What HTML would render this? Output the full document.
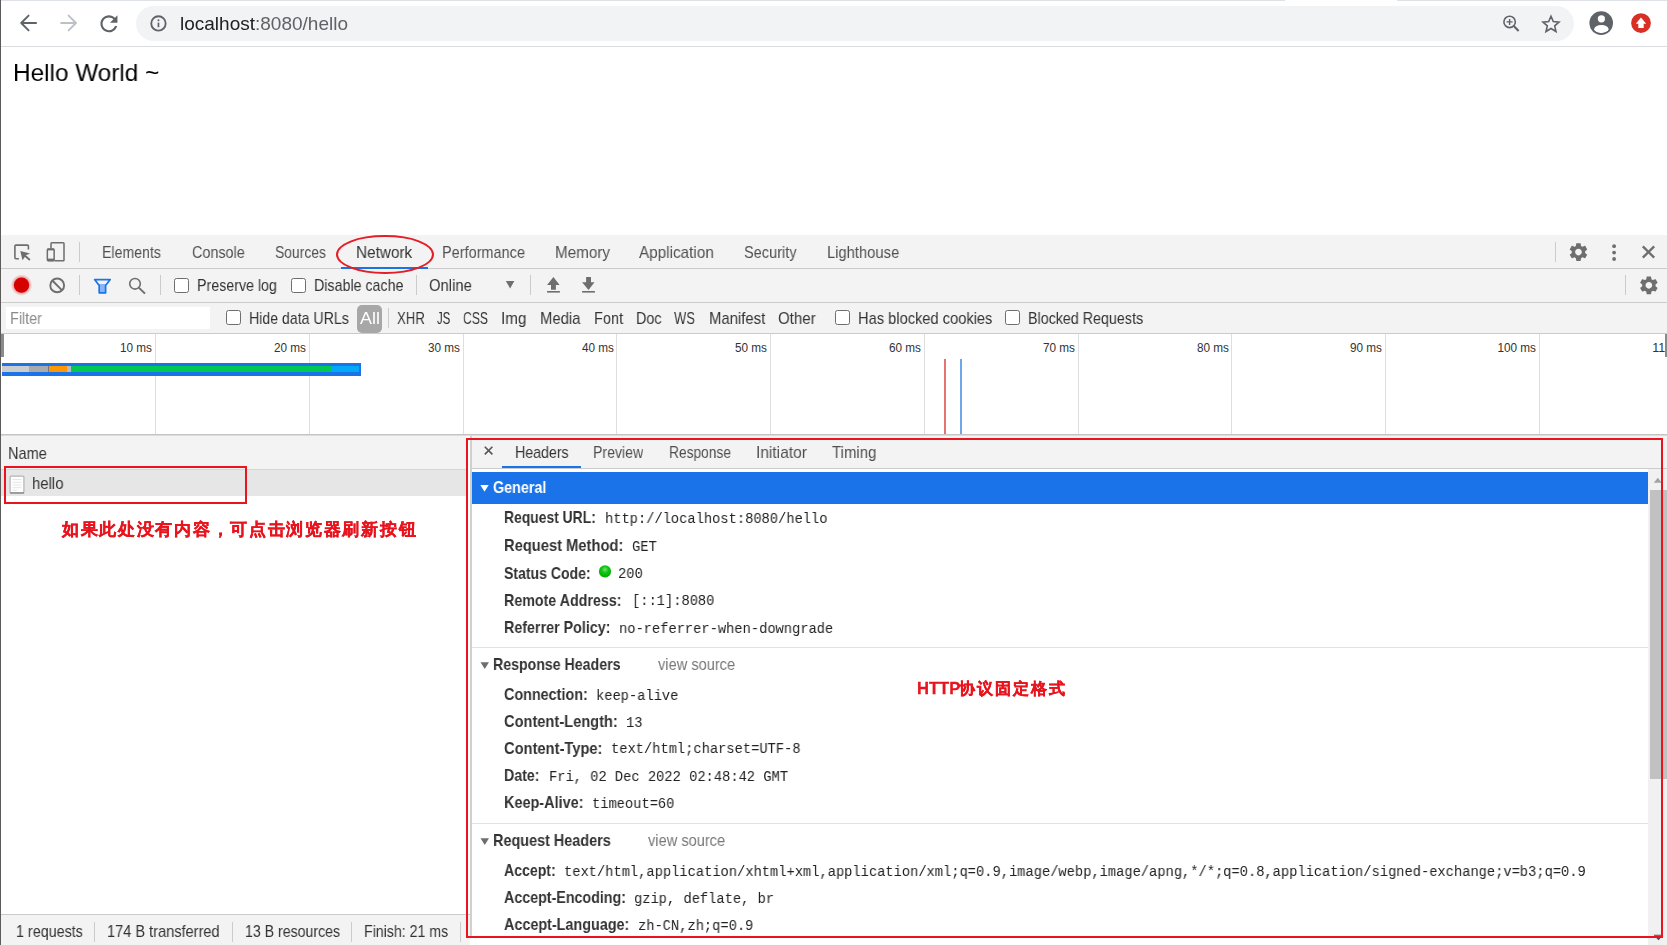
<!DOCTYPE html>
<html><head><meta charset="utf-8">
<style>
html,body{margin:0;padding:0;width:1667px;height:945px;overflow:hidden;background:#fff;font-family:"Liberation Sans",sans-serif}
.a{position:absolute;box-sizing:border-box}
.t{position:absolute;white-space:nowrap;line-height:1;transform-origin:0 0;will-change:transform}
</style></head><body>
<div class="a" style="left:0px;top:0px;width:1285px;height:1px;background:#dee1e6;"></div>
<div class="a" style="left:1397px;top:0px;width:270px;height:1px;background:#dee1e6;"></div>
<div class="a" style="left:0px;top:46px;width:1667px;height:1px;background:#dadce0;"></div>
<div class="a" style="left:136px;top:6px;width:1438px;height:35px;background:#f1f3f4;border-radius:17.5px"></div>
<svg class="a" style="left:0;top:0" width="200" height="46" viewBox="0 0 200 46">
<path d="M28.6 15.6 L21.2 23 L28.6 30.4 M21.4 23 H36.1" fill="none" stroke="#5f6368" stroke-width="1.9" stroke-linecap="round" stroke-linejoin="round"/>
<path d="M68.6 15.6 L76 23 L68.6 30.4 M75.8 23 H61.1" fill="none" stroke="#bdc1c6" stroke-width="1.9" stroke-linecap="round" stroke-linejoin="round"/>
<g transform="translate(96.2,11) scale(1.0625)"><path d="M17.65 6.35C16.2 4.9 14.21 4 12 4c-4.42 0-7.99 3.58-7.99 8s3.57 8 7.99 8c3.73 0 6.84-2.55 7.73-6h-2.08c-.82 2.33-3.04 4-5.65 4-3.31 0-6-2.69-6-6s2.69-6 6-6c1.66 0 3.14.69 4.22 1.78L13 11h7V4l-2.35 2.35z" fill="#5f6368"/></g>
<circle cx="158.45" cy="23.4" r="7.2" fill="none" stroke="#5f6368" stroke-width="1.85"/>
<circle cx="158.45" cy="20.2" r="1" fill="#5f6368"/>
<rect x="157.6" y="22.6" width="1.7" height="4.6" fill="#5f6368"/>
</svg>
<svg class="a" style="left:1490px;top:0" width="177" height="46" viewBox="1490 0 177 46">
<circle cx="1509.6" cy="21.9" r="5.7" fill="none" stroke="#5f6368" stroke-width="1.6"/>
<path d="M1506.6 21.9 H1512.6 M1509.6 18.9 V24.9" stroke="#5f6368" stroke-width="1.4"/>
<path d="M1513.8 26.1 L1518.6 30.9" stroke="#5f6368" stroke-width="2.1"/>
<path d="M1551 16.3 L1553.3 21.6 L1559 22.1 L1554.7 25.9 L1556 31.5 L1551 28.5 L1546 31.5 L1547.3 25.9 L1543 22.1 L1548.7 21.6 Z" fill="none" stroke="#5f6368" stroke-width="1.6" stroke-linejoin="miter"/>
<circle cx="1601.2" cy="23.1" r="11.8" fill="#5f6368"/>
<circle cx="1601.4" cy="18.8" r="3.6" fill="#fff"/>
<clipPath id="av"><circle cx="1601.2" cy="23.1" r="10.2"/></clipPath>
<ellipse cx="1601.4" cy="29.2" rx="7.2" ry="4.2" fill="#fff" clip-path="url(#av)"/>
<circle cx="1641" cy="23.1" r="9.9" fill="#d93025"/>
<path d="M1641 17.6 L1646.2 23.8 H1643.7 V27.9 H1638.3 V23.8 H1635.8 Z" fill="#fff"/>
</svg>
<div class="a" style="left:0px;top:235px;width:1667px;height:99px;background:#f3f3f3;"></div>
<div class="a" style="left:0px;top:268px;width:1667px;height:1px;background:#cbcbcb;"></div>
<div class="a" style="left:0px;top:302px;width:1667px;height:1px;background:#cbcbcb;"></div>
<div class="a" style="left:0px;top:333px;width:1667px;height:1px;background:#cbcbcb;"></div>
<svg class="a" style="left:0;top:235px" width="1667" height="100" viewBox="0 235 1667 100">
<path d="M18.9 258.7 H15.9 Q14.9 258.7 14.9 257.7 V246.1 Q14.9 245.1 15.9 245.1 H27.4 Q28.4 245.1 28.4 246.1 V249.6" fill="none" stroke="#6e6e6e" stroke-width="1.6"/>
<path d="M20.3 251 L30.1 253.6 L26 255.2 L22.5 260.3 Z" fill="#6e6e6e"/>
<path d="M25 255.7 L29.9 260" stroke="#6e6e6e" stroke-width="1.9"/>
<path d="M51 248.5 V243.6 Q51 242.8 51.8 242.8 H63.2 Q64 242.8 64 243.6 V260 Q64 260.8 63.2 260.8 H54.5" fill="none" stroke="#6e6e6e" stroke-width="1.5"/>
<rect x="47.35" y="248.95" width="6.8" height="11.85" rx="1" fill="none" stroke="#6e6e6e" stroke-width="1.5"/>
<rect x="47.4" y="248.6" width="6.8" height="1.8" fill="#6e6e6e"/>
<rect x="47.4" y="258.6" width="6.8" height="2.6" fill="#6e6e6e"/>
<rect x="79" y="242" width="1" height="20" fill="#cbcbcb"/>
<rect x="1555" y="242" width="1" height="20" fill="#cbcbcb"/>
<g transform="translate(1567.3,240.9) scale(0.93)" fill="#6e6e6e"><path id="gear" d="M19.14,12.94c0.04-0.3,0.06-0.61,0.06-0.94c0-0.32-0.02-0.64-0.07-0.94l2.03-1.58c0.18-0.14,0.23-0.41,0.12-0.61l-1.92-3.32c-0.12-0.22-0.37-0.29-0.59-0.22l-2.39,0.96c-0.5-0.38-1.03-0.7-1.62-0.94L14.4,2.81c-0.04-0.24-0.24-0.41-0.48-0.41h-3.84c-0.24,0-0.43,0.17-0.47,0.41L9.25,5.35C8.66,5.59,8.12,5.92,7.63,6.29L5.24,5.33c-0.22-0.08-0.47,0-0.59,0.22L2.74,8.87C2.62,9.08,2.66,9.34,2.86,9.48l2.03,1.58C4.84,11.36,4.8,11.69,4.8,12s0.02,0.64,0.07,0.94l-2.03,1.58c-0.18,0.14-0.23,0.41-0.12,0.61l1.92,3.32c0.12,0.22,0.37,0.29,0.59,0.22l2.39-0.96c0.5,0.38,1.03,0.7,1.62,0.94l0.36,2.54c0.05,0.24,0.24,0.41,0.48,0.41h3.84c0.24,0,0.44-0.17,0.47-0.41l0.36-2.54c0.59-0.24,1.13-0.56,1.62-0.94l2.39,0.96c0.22,0.08,0.47,0,0.59-0.22l1.92-3.32c0.12-0.22,0.07-0.47-0.12-0.61L19.14,12.94z M12,15.6c-1.98,0-3.6-1.62-3.6-3.6s1.62-3.6,3.6-3.6s3.6,1.62,3.6,3.6S13.98,15.6,12,15.6z"/></g>
<circle cx="1614.1" cy="246.2" r="1.9" fill="#6e6e6e"/>
<circle cx="1614.1" cy="252.6" r="1.9" fill="#6e6e6e"/>
<circle cx="1614.1" cy="259" r="1.9" fill="#6e6e6e"/>
<path d="M1642.8 246.4 L1654.2 257.6 M1654.2 246.4 L1642.8 257.6" stroke="#6e6e6e" stroke-width="2.3"/>

<defs><radialGradient id="glow"><stop offset="0.7" stop-color="rgba(213,0,0,0.35)"/><stop offset="1" stop-color="rgba(213,0,0,0)"/></radialGradient></defs><circle cx="21.5" cy="285.1" r="10.8" fill="url(#glow)"/>
<circle cx="21.5" cy="285.1" r="7.7" fill="#d50000"/>
<circle cx="57.2" cy="285.4" r="6.9" fill="none" stroke="#6e6e6e" stroke-width="1.9"/>
<path d="M52.3 280.5 L62.1 290.3" stroke="#6e6e6e" stroke-width="1.9"/>
<rect x="79" y="275" width="1" height="20" fill="#cbcbcb"/>
<path d="M97.97 284 H106.8 L105.6 285.6 V292.8 H99.2 V285.6 Z" fill="#8ab4f8"/>
<path d="M94.6 279.6 H110.2 L105.6 285.6 V292.8 H99.2 V285.6 Z" fill="none" stroke="#1a73e8" stroke-width="1.7" stroke-linejoin="round"/>
<circle cx="135" cy="283.8" r="5.3" fill="none" stroke="#6e6e6e" stroke-width="1.6"/>
<path d="M138.8 287.6 L145 293.6" stroke="#6e6e6e" stroke-width="2"/>
<rect x="160" y="275" width="1" height="20" fill="#cbcbcb"/>
<rect x="416" y="275" width="1" height="20" fill="#cbcbcb"/>
<path d="M505.9 281 H514.3 L510.1 288.4 Z" fill="#6e6e6e"/>
<rect x="530" y="275" width="1" height="20" fill="#cbcbcb"/>
<path d="M553.4 277.1 L559.6 284.9 H555.9 V289.8 H551 V284.9 H547.1 Z" fill="#6e6e6e"/>
<rect x="547.1" y="291" width="12.8" height="1.6" fill="#6e6e6e"/>
<path d="M586.1 277.1 H591 V282.2 H594.5 L588.5 290 L582.1 282.2 H586.1 Z" fill="#6e6e6e"/>
<rect x="582.1" y="291" width="12.8" height="1.6" fill="#6e6e6e"/>
<rect x="1625" y="275" width="1" height="20" fill="#cbcbcb"/>
<g transform="translate(1637.7,274.2) scale(0.93)" fill="#6e6e6e"><use href="#gear"/></g>
<rect x="388" y="308" width="1" height="20" fill="#cbcbcb"/>
</svg>
<div class="a" style="left:341px;top:267px;width:87px;height:2px;background:#1a73e8;"></div>
<div class="a" style="left:336px;top:234.5px;width:98px;height:39.5px;border:2px solid #e41e26;border-radius:50%"></div>
<div class="a" style="left:174px;top:278px;width:15px;height:15px;background:#fff;border:1.3px solid #6e6e6e;border-radius:2.5px;box-sizing:border-box"></div>
<div class="a" style="left:291px;top:278px;width:15px;height:15px;background:#fff;border:1.3px solid #6e6e6e;border-radius:2.5px;box-sizing:border-box"></div>
<div class="a" style="left:6px;top:307px;width:204px;height:22px;background:#fff;"></div>
<div class="a" style="left:226px;top:310px;width:15px;height:15px;background:#fff;border:1.3px solid #6e6e6e;border-radius:2.5px;box-sizing:border-box"></div>
<div class="a" style="left:357px;top:305px;width:25px;height:28px;background:#a7a7a7;border-radius:5px"></div>
<div class="a" style="left:835px;top:310px;width:15px;height:15px;background:#fff;border:1.3px solid #6e6e6e;border-radius:2.5px;box-sizing:border-box"></div>
<div class="a" style="left:1005px;top:310px;width:15px;height:15px;background:#fff;border:1.3px solid #6e6e6e;border-radius:2.5px;box-sizing:border-box"></div>
<div class="a" style="left:155.0px;top:334px;width:1px;height:100px;background:#dedede;"></div>
<div class="a" style="left:72.20px;top:341.62px;width:80px;text-align:right;font-size:12.5px;line-height:1;color:#333;transform:scaleX(0.94);transform-origin:100% 0">10 ms</div>
<div class="a" style="left:308.78px;top:334px;width:1px;height:100px;background:#dedede;"></div>
<div class="a" style="left:225.98px;top:341.62px;width:80px;text-align:right;font-size:12.5px;line-height:1;color:#333;transform:scaleX(0.94);transform-origin:100% 0">20 ms</div>
<div class="a" style="left:462.56px;top:334px;width:1px;height:100px;background:#dedede;"></div>
<div class="a" style="left:379.76px;top:341.62px;width:80px;text-align:right;font-size:12.5px;line-height:1;color:#333;transform:scaleX(0.94);transform-origin:100% 0">30 ms</div>
<div class="a" style="left:616.34px;top:334px;width:1px;height:100px;background:#dedede;"></div>
<div class="a" style="left:533.54px;top:341.62px;width:80px;text-align:right;font-size:12.5px;line-height:1;color:#333;transform:scaleX(0.94);transform-origin:100% 0">40 ms</div>
<div class="a" style="left:770.12px;top:334px;width:1px;height:100px;background:#dedede;"></div>
<div class="a" style="left:687.32px;top:341.62px;width:80px;text-align:right;font-size:12.5px;line-height:1;color:#333;transform:scaleX(0.94);transform-origin:100% 0">50 ms</div>
<div class="a" style="left:923.9px;top:334px;width:1px;height:100px;background:#dedede;"></div>
<div class="a" style="left:841.10px;top:341.62px;width:80px;text-align:right;font-size:12.5px;line-height:1;color:#333;transform:scaleX(0.94);transform-origin:100% 0">60 ms</div>
<div class="a" style="left:1077.68px;top:334px;width:1px;height:100px;background:#dedede;"></div>
<div class="a" style="left:994.88px;top:341.62px;width:80px;text-align:right;font-size:12.5px;line-height:1;color:#333;transform:scaleX(0.94);transform-origin:100% 0">70 ms</div>
<div class="a" style="left:1231.46px;top:334px;width:1px;height:100px;background:#dedede;"></div>
<div class="a" style="left:1148.66px;top:341.62px;width:80px;text-align:right;font-size:12.5px;line-height:1;color:#333;transform:scaleX(0.94);transform-origin:100% 0">80 ms</div>
<div class="a" style="left:1385.24px;top:334px;width:1px;height:100px;background:#dedede;"></div>
<div class="a" style="left:1302.44px;top:341.62px;width:80px;text-align:right;font-size:12.5px;line-height:1;color:#333;transform:scaleX(0.94);transform-origin:100% 0">90 ms</div>
<div class="a" style="left:1539.02px;top:334px;width:1px;height:100px;background:#dedede;"></div>
<div class="a" style="left:1456.22px;top:341.62px;width:80px;text-align:right;font-size:12.5px;line-height:1;color:#333;transform:scaleX(0.94);transform-origin:100% 0">100 ms</div>
<div class="a" style="left:1652.3px;top:341.62px;font-size:12.5px;line-height:1;color:#333">11</div>
<div class="a" style="left:0px;top:334px;width:4px;height:23px;background:#8a8a8a;"></div>
<div class="a" style="left:1665px;top:334px;width:2px;height:23px;background:#8a8a8a;"></div>
<div class="a" style="left:2px;top:363px;width:359px;height:13px;background:#1a73e8;"></div>
<div class="a" style="left:2px;top:366px;width:27px;height:6px;background:#cccccc;"></div>
<div class="a" style="left:29px;top:366px;width:18.5px;height:6px;background:#aaaaaa;"></div>
<div class="a" style="left:47.5px;top:366px;width:1.1px;height:6px;background:#777;"></div>
<div class="a" style="left:48.6px;top:366px;width:18.4px;height:6px;background:#ff9800;"></div>
<div class="a" style="left:67px;top:366px;width:3.7px;height:6px;background:#bcbcbc;"></div>
<div class="a" style="left:70.7px;top:366px;width:260.2px;height:6px;background:#00c853;"></div>
<div class="a" style="left:330.9px;top:366px;width:28.5px;height:6px;background:#03a9f4;"></div>
<div class="a" style="left:943.5px;top:359px;width:2.5px;height:75px;background:#e57373;"></div>
<div class="a" style="left:960px;top:359px;width:2.3px;height:75px;background:#6fa8e8;"></div>
<div class="a" style="left:0px;top:434px;width:1667px;height:1px;background:#c4c4c4;"></div>
<div class="a" style="left:0px;top:435px;width:1667px;height:1px;background:#dcdcdc;"></div>
<div class="a" style="left:0px;top:436px;width:466px;height:33px;background:#f3f3f3;"></div>
<div class="a" style="left:0px;top:469px;width:466px;height:1px;background:#d6d6d6;"></div>
<div class="a" style="left:0px;top:470px;width:466px;height:26px;background:#e6e6e6;"></div>
<svg class="a" style="left:0;top:470px" width="40" height="30" viewBox="0 470 40 30">
<rect x="10.1" y="476.1" width="13.8" height="17" rx="1" fill="#fff" stroke="#b4b4b4" stroke-width="1.2"/><rect x="10" y="492.2" width="14" height="1.4" fill="#8a8a8a"/>
<path d="M12.5 479.6 H21.5 M12.5 482.3 H21.5 M12.5 485 H21.5 M12.5 487.7 H21.5 M12.5 490.2 H17" stroke="#e4e4e4" stroke-width="1"/>
</svg>
<div class="a" style="left:470px;top:436px;width:2px;height:502px;background:#d0d0d0;"></div>
<div class="a" style="left:0px;top:914px;width:470px;height:1px;background:#cbcbcb;"></div>
<div class="a" style="left:0px;top:915px;width:470px;height:30px;background:#f3f3f3;"></div>
<div class="a" style="left:93.9px;top:922px;width:1px;height:20px;background:#cbcbcb;"></div>
<div class="a" style="left:232.1px;top:922px;width:1px;height:20px;background:#cbcbcb;"></div>
<div class="a" style="left:351.4px;top:922px;width:1px;height:20px;background:#cbcbcb;"></div>
<div class="a" style="left:460.2px;top:922px;width:1px;height:20px;background:#cbcbcb;"></div>
<div class="a" style="left:472px;top:436px;width:1195px;height:32px;background:#f3f3f3;"></div>
<div class="a" style="left:472px;top:468px;width:1195px;height:1px;background:#cbcbcb;"></div>
<svg class="a" style="left:470px;top:436px" width="40" height="30" viewBox="470 436 40 30">
<path d="M484.8 446.8 L492.4 454.4 M492.4 446.8 L484.8 454.4" stroke="#555" stroke-width="1.6"/>
</svg>
<div class="a" style="left:502px;top:466px;width:79px;height:2px;background:#1a73e8;"></div>
<div class="a" style="left:1648px;top:469px;width:19px;height:476px;background:#f1f1f1;"></div>
<div class="a" style="left:1650px;top:490px;width:17px;height:289px;background:#c1c1c1;"></div>
<svg class="a" style="left:1648px;top:469px" width="19" height="476" viewBox="1648 469 19 476">
<path d="M1653.8 482.8 L1657.8 477.8 L1661.8 482.8 Z" fill="#a3a3a3"/>
<path d="M1654 935.3 H1661" stroke="#606060" stroke-width="1.2"/><path d="M1656.3 938 H1660.7 L1658.5 940.3 Z" fill="#505050"/>
</svg>
<div class="a" style="left:472px;top:472px;width:1176px;height:31.5px;background:#1a73e8;"></div>
<svg class="a" style="left:470px;top:472px" width="30" height="30" viewBox="470 472 30 30"><path d="M480.3 485 H488.7 L484.5 491.7 Z" fill="#fff"/></svg>
<svg class="a" style="left:595px;top:562px" width="20" height="20" viewBox="595 562 20 20">
<defs><radialGradient id="gd" cx="0.5" cy="0.35" r="0.6"><stop offset="0" stop-color="#7be07b"/><stop offset="0.45" stop-color="#14c414"/><stop offset="1" stop-color="#00b000"/></radialGradient></defs>
<circle cx="605" cy="571.4" r="6.1" fill="url(#gd)"/>
</svg>
<div class="a" style="left:472px;top:647px;width:1176px;height:1px;background:#e2e2e2;"></div>
<svg class="a" style="left:470px;top:653.9px" width="30" height="20" viewBox="470 653.9 30 20"><path d="M480.5 662.1999999999999 H489 L484.75 668.9 Z" fill="#6e6e6e"/></svg>
<div class="a" style="left:472px;top:823px;width:1176px;height:1px;background:#e2e2e2;"></div>
<svg class="a" style="left:470px;top:829.5px" width="30" height="20" viewBox="470 829.5 30 20"><path d="M480.5 837.8 H489 L484.75 844.5 Z" fill="#6e6e6e"/></svg>
<div class="a" style="left:0px;top:0px;width:1px;height:945px;background:#5b5b5b;"></div>
<div class="t" style="left:179.5px;top:13.93px;font-size:19px;font-weight:400;color:#202124;font-family:'Liberation Sans',sans-serif;transform:scaleX(1.0002)">localhost<span style="color:#5f6368">:8080/hello</span></div>
<div class="t" style="left:12.5px;top:60.67px;font-size:24.5px;font-weight:400;color:#000;font-family:'Liberation Sans',sans-serif;transform:scaleX(0.9932)">Hello World ~</div>
<div class="t" style="left:102.4px;top:244.29px;font-size:16.2px;font-weight:400;color:#505050;font-family:'Liberation Sans',sans-serif;transform:scaleX(0.8713)">Elements</div>
<div class="t" style="left:191.7px;top:244.29px;font-size:16.2px;font-weight:400;color:#505050;font-family:'Liberation Sans',sans-serif;transform:scaleX(0.8871)">Console</div>
<div class="t" style="left:274.5px;top:244.29px;font-size:16.2px;font-weight:400;color:#505050;font-family:'Liberation Sans',sans-serif;transform:scaleX(0.8570)">Sources</div>
<div class="t" style="left:356px;top:244.29px;font-size:16.2px;font-weight:400;color:#333;font-family:'Liberation Sans',sans-serif;transform:scaleX(0.9448)">Network</div>
<div class="t" style="left:442px;top:244.29px;font-size:16.2px;font-weight:400;color:#505050;font-family:'Liberation Sans',sans-serif;transform:scaleX(0.8956)">Performance</div>
<div class="t" style="left:554.7px;top:244.29px;font-size:16.2px;font-weight:400;color:#505050;font-family:'Liberation Sans',sans-serif;transform:scaleX(0.9407)">Memory</div>
<div class="t" style="left:639.4px;top:244.29px;font-size:16.2px;font-weight:400;color:#505050;font-family:'Liberation Sans',sans-serif;transform:scaleX(0.9444)">Application</div>
<div class="t" style="left:744.2px;top:244.29px;font-size:16.2px;font-weight:400;color:#505050;font-family:'Liberation Sans',sans-serif;transform:scaleX(0.8977)">Security</div>
<div class="t" style="left:827px;top:244.29px;font-size:16.2px;font-weight:400;color:#505050;font-family:'Liberation Sans',sans-serif;transform:scaleX(0.9127)">Lighthouse</div>
<div class="t" style="left:196.5px;top:277.09px;font-size:16.2px;font-weight:400;color:#333;font-family:'Liberation Sans',sans-serif;transform:scaleX(0.8803)">Preserve log</div>
<div class="t" style="left:314px;top:277.09px;font-size:16.2px;font-weight:400;color:#333;font-family:'Liberation Sans',sans-serif;transform:scaleX(0.8792)">Disable cache</div>
<div class="t" style="left:429px;top:277.09px;font-size:16.2px;font-weight:400;color:#333;font-family:'Liberation Sans',sans-serif;transform:scaleX(0.9167)">Online</div>
<div class="t" style="left:10.2px;top:310.19px;font-size:16.2px;font-weight:400;color:#8a8a8a;font-family:'Liberation Sans',sans-serif;transform:scaleX(0.8893)">Filter</div>
<div class="t" style="left:249.2px;top:310.19px;font-size:16.2px;font-weight:400;color:#333;font-family:'Liberation Sans',sans-serif;transform:scaleX(0.8733)">Hide data URLs</div>
<div class="t" style="left:359.5px;top:310.19px;font-size:16.2px;font-weight:400;color:#fff;font-family:'Liberation Sans',sans-serif;transform:scaleX(1.1111)">All</div>
<div class="t" style="left:396.5px;top:310.19px;font-size:16.2px;font-weight:400;color:#333;font-family:'Liberation Sans',sans-serif;transform:scaleX(0.8161)">XHR</div>
<div class="t" style="left:437.1px;top:310.19px;font-size:16.2px;font-weight:400;color:#333;font-family:'Liberation Sans',sans-serif;transform:scaleX(0.7035)">JS</div>
<div class="t" style="left:463.3px;top:310.19px;font-size:16.2px;font-weight:400;color:#333;font-family:'Liberation Sans',sans-serif;transform:scaleX(0.7478)">CSS</div>
<div class="t" style="left:500.8px;top:310.19px;font-size:16.2px;font-weight:400;color:#333;font-family:'Liberation Sans',sans-serif;transform:scaleX(0.9407)">Img</div>
<div class="t" style="left:539.5px;top:310.19px;font-size:16.2px;font-weight:400;color:#333;font-family:'Liberation Sans',sans-serif;transform:scaleX(0.9185)">Media</div>
<div class="t" style="left:593.8px;top:310.19px;font-size:16.2px;font-weight:400;color:#333;font-family:'Liberation Sans',sans-serif;transform:scaleX(0.8949)">Font</div>
<div class="t" style="left:636px;top:310.19px;font-size:16.2px;font-weight:400;color:#333;font-family:'Liberation Sans',sans-serif;transform:scaleX(0.8820)">Doc</div>
<div class="t" style="left:674.4px;top:310.19px;font-size:16.2px;font-weight:400;color:#333;font-family:'Liberation Sans',sans-serif;transform:scaleX(0.8053)">WS</div>
<div class="t" style="left:709.2px;top:310.19px;font-size:16.2px;font-weight:400;color:#333;font-family:'Liberation Sans',sans-serif;transform:scaleX(0.9201)">Manifest</div>
<div class="t" style="left:778.2px;top:310.19px;font-size:16.2px;font-weight:400;color:#333;font-family:'Liberation Sans',sans-serif;transform:scaleX(0.9333)">Other</div>
<div class="t" style="left:857.9px;top:310.19px;font-size:16.2px;font-weight:400;color:#333;font-family:'Liberation Sans',sans-serif;transform:scaleX(0.9052)">Has blocked cookies</div>
<div class="t" style="left:1027.6px;top:310.19px;font-size:16.2px;font-weight:400;color:#333;font-family:'Liberation Sans',sans-serif;transform:scaleX(0.8821)">Blocked Requests</div>
<div class="t" style="left:7.8px;top:445.29px;font-size:16.2px;font-weight:400;color:#333;font-family:'Liberation Sans',sans-serif;transform:scaleX(0.8961)">Name</div>
<div class="t" style="left:31.7px;top:475.29px;font-size:16.2px;font-weight:400;color:#333;font-family:'Liberation Sans',sans-serif;transform:scaleX(0.9210)">hello</div>
<div class="t" style="left:15.8px;top:923.29px;font-size:16.2px;font-weight:400;color:#333;font-family:'Liberation Sans',sans-serif;transform:scaleX(0.8837)">1 requests</div>
<div class="t" style="left:107.1px;top:923.29px;font-size:16.2px;font-weight:400;color:#333;font-family:'Liberation Sans',sans-serif;transform:scaleX(0.9002)">174 B transferred</div>
<div class="t" style="left:244.7px;top:923.29px;font-size:16.2px;font-weight:400;color:#333;font-family:'Liberation Sans',sans-serif;transform:scaleX(0.8735)">13 B resources</div>
<div class="t" style="left:364.2px;top:923.29px;font-size:16.2px;font-weight:400;color:#333;font-family:'Liberation Sans',sans-serif;transform:scaleX(0.8736)">Finish: 21 ms</div>
<div class="t" style="left:514.6px;top:443.89px;font-size:16.2px;font-weight:400;color:#333;font-family:'Liberation Sans',sans-serif;transform:scaleX(0.8760)">Headers</div>
<div class="t" style="left:593.3px;top:443.89px;font-size:16.2px;font-weight:400;color:#505050;font-family:'Liberation Sans',sans-serif;transform:scaleX(0.8701)">Preview</div>
<div class="t" style="left:668.5px;top:443.89px;font-size:16.2px;font-weight:400;color:#505050;font-family:'Liberation Sans',sans-serif;transform:scaleX(0.8504)">Response</div>
<div class="t" style="left:755.6px;top:443.89px;font-size:16.2px;font-weight:400;color:#505050;font-family:'Liberation Sans',sans-serif;transform:scaleX(0.9587)">Initiator</div>
<div class="t" style="left:832.1px;top:443.89px;font-size:16.2px;font-weight:400;color:#505050;font-family:'Liberation Sans',sans-serif;transform:scaleX(0.9253)">Timing</div>
<div class="t" style="left:492.8px;top:479.09px;font-size:16.2px;font-weight:700;color:#fff;font-family:'Liberation Sans',sans-serif;transform:scaleX(0.8856)">General</div>
<div class="t" style="left:504.2px;top:509.29px;font-size:16.2px;font-weight:700;color:#333;font-family:'Liberation Sans',sans-serif;transform:scaleX(0.8577)">Request URL:</div>
<div class="t" style="left:605px;top:511.98px;font-size:14.5px;font-weight:400;color:#222;font-family:'Liberation Mono',monospace;transform:scaleX(0.9469)">http://localhost:8080/hello</div>
<div class="t" style="left:504.2px;top:537.09px;font-size:16.2px;font-weight:700;color:#333;font-family:'Liberation Sans',sans-serif;transform:scaleX(0.9086)">Request Method:</div>
<div class="t" style="left:632px;top:539.78px;font-size:14.5px;font-weight:400;color:#222;font-family:'Liberation Mono',monospace;transform:scaleX(0.9468)">GET</div>
<div class="t" style="left:504.2px;top:564.59px;font-size:16.2px;font-weight:700;color:#333;font-family:'Liberation Sans',sans-serif;transform:scaleX(0.8674)">Status Code:</div>
<div class="t" style="left:617.6px;top:567.28px;font-size:14.5px;font-weight:400;color:#222;font-family:'Liberation Mono',monospace;transform:scaleX(0.9468)">200</div>
<div class="t" style="left:504.2px;top:591.59px;font-size:16.2px;font-weight:700;color:#333;font-family:'Liberation Sans',sans-serif;transform:scaleX(0.8806)">Remote Address:</div>
<div class="t" style="left:631.5px;top:594.28px;font-size:14.5px;font-weight:400;color:#222;font-family:'Liberation Mono',monospace;transform:scaleX(0.9470)">[::1]:8080</div>
<div class="t" style="left:504.2px;top:618.99px;font-size:16.2px;font-weight:700;color:#333;font-family:'Liberation Sans',sans-serif;transform:scaleX(0.8825)">Referrer Policy:</div>
<div class="t" style="left:619.1px;top:621.68px;font-size:14.5px;font-weight:400;color:#222;font-family:'Liberation Mono',monospace;transform:scaleX(0.9469)">no-referrer-when-downgrade</div>
<div class="t" style="left:492.9px;top:656.19px;font-size:16.2px;font-weight:700;color:#333;font-family:'Liberation Sans',sans-serif;transform:scaleX(0.8747)">Response Headers</div>
<div class="t" style="left:657.9px;top:656.19px;font-size:16.2px;font-weight:400;color:#777;font-family:'Liberation Sans',sans-serif;transform:scaleX(0.9021)">view source</div>
<div class="t" style="left:504.2px;top:686.09px;font-size:16.2px;font-weight:700;color:#333;font-family:'Liberation Sans',sans-serif;transform:scaleX(0.8875)">Connection:</div>
<div class="t" style="left:595.6px;top:688.78px;font-size:14.5px;font-weight:400;color:#222;font-family:'Liberation Mono',monospace;transform:scaleX(0.9470)">keep-alive</div>
<div class="t" style="left:504.2px;top:712.99px;font-size:16.2px;font-weight:700;color:#333;font-family:'Liberation Sans',sans-serif;transform:scaleX(0.9041)">Content-Length:</div>
<div class="t" style="left:626px;top:715.68px;font-size:14.5px;font-weight:400;color:#222;font-family:'Liberation Mono',monospace;transform:scaleX(0.9468)">13</div>
<div class="t" style="left:504.2px;top:739.79px;font-size:16.2px;font-weight:700;color:#333;font-family:'Liberation Sans',sans-serif;transform:scaleX(0.9078)">Content-Type:</div>
<div class="t" style="left:611px;top:742.48px;font-size:14.5px;font-weight:400;color:#222;font-family:'Liberation Mono',monospace;transform:scaleX(0.9469)">text/html;charset=UTF-8</div>
<div class="t" style="left:504.2px;top:766.89px;font-size:16.2px;font-weight:700;color:#333;font-family:'Liberation Sans',sans-serif;transform:scaleX(0.8769)">Date:</div>
<div class="t" style="left:548.8px;top:769.58px;font-size:14.5px;font-weight:400;color:#222;font-family:'Liberation Mono',monospace;transform:scaleX(0.9470)">Fri, 02 Dec 2022 02:48:42 GMT</div>
<div class="t" style="left:504.2px;top:794.29px;font-size:16.2px;font-weight:700;color:#333;font-family:'Liberation Sans',sans-serif;transform:scaleX(0.8915)">Keep-Alive:</div>
<div class="t" style="left:592.3px;top:796.98px;font-size:14.5px;font-weight:400;color:#222;font-family:'Liberation Mono',monospace;transform:scaleX(0.9470)">timeout=60</div>
<div class="t" style="left:492.9px;top:831.79px;font-size:16.2px;font-weight:700;color:#333;font-family:'Liberation Sans',sans-serif;transform:scaleX(0.8906)">Request Headers</div>
<div class="t" style="left:648.2px;top:831.79px;font-size:16.2px;font-weight:400;color:#777;font-family:'Liberation Sans',sans-serif;transform:scaleX(0.9021)">view source</div>
<div class="t" style="left:504.2px;top:861.89px;font-size:16.2px;font-weight:700;color:#333;font-family:'Liberation Sans',sans-serif;transform:scaleX(0.8707)">Accept:</div>
<div class="t" style="left:564px;top:864.58px;font-size:14.5px;font-weight:400;color:#222;font-family:'Liberation Mono',monospace;transform:scaleX(0.9470)">text/html,application/xhtml+xml,application/xml;q=0.9,image/webp,image/apng,*/*;q=0.8,application/signed-exchange;v=b3;q=0.9</div>
<div class="t" style="left:504.2px;top:888.89px;font-size:16.2px;font-weight:700;color:#333;font-family:'Liberation Sans',sans-serif;transform:scaleX(0.8809)">Accept-Encoding:</div>
<div class="t" style="left:634.3px;top:891.58px;font-size:14.5px;font-weight:400;color:#222;font-family:'Liberation Mono',monospace;transform:scaleX(0.9469)">gzip, deflate, br</div>
<div class="t" style="left:504.2px;top:916.09px;font-size:16.2px;font-weight:700;color:#333;font-family:'Liberation Sans',sans-serif;transform:scaleX(0.8873)">Accept-Language:</div>
<div class="t" style="left:638.2px;top:918.78px;font-size:14.5px;font-weight:400;color:#222;font-family:'Liberation Mono',monospace;transform:scaleX(0.9469)">zh-CN,zh;q=0.9</div>
<div class="t" style="left:61.7px;top:522.36px;font-size:16.6px;font-weight:700;color:#e8141e;font-family:'Liberation Sans',sans-serif;letter-spacing:1.7px;-webkit-text-stroke:0.35px #e8141e">如果此处没有内容，可点击浏览器刷新按钮</div>
<div class="t" style="left:916.7px;top:681.06px;font-size:16.6px;font-weight:700;color:#e8141e;font-family:'Liberation Sans',sans-serif;transform:scaleX(0.9994);-webkit-text-stroke:0.3px #e8141e">HTTP</div>
<div class="t" style="left:958.5px;top:680.01px;font-size:16.3px;font-weight:700;color:#e8141e;font-family:'Liberation Sans',sans-serif;letter-spacing:2.0px;-webkit-text-stroke:0.35px #e8141e">协议固定格式</div>
<div class="a" style="left:4px;top:466px;width:243px;height:38px;border:2px solid #e8141e"></div>
<div class="a" style="left:466px;top:438px;width:1197px;height:500px;border:2px solid #e8141e"></div>
</body></html>
